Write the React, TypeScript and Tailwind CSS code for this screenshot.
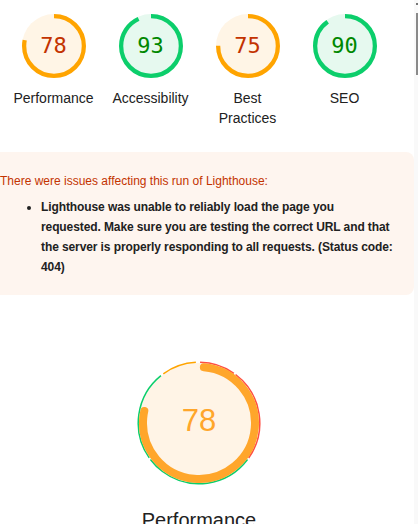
import { ReactNode } from "react";

const SMALL_R = 56;
const SMALL_C = 2 * Math.PI * SMALL_R;

type Tone = "average" | "pass";

const tones: Record<Tone, { arc: string; fill: string; text: string }> = {
  average: { arc: "#ffa400", fill: "#fff5e6", text: "text-[#c33300]" },
  pass: { arc: "#0cce6b", fill: "#e6f9ef", text: "text-[#008800]" },
};

function cx(...parts: string[]) {
  return parts.join(" ");
}

const SmallGauge = ({
  score,
  tone,
  label,
}: {
  score: number;
  tone: Tone;
  label: ReactNode;
}) => {
  const t = tones[tone];
  return (
    <div className="flex w-[97px] flex-col items-center">
      <div className="relative h-[64px] w-[64px]">
        <svg viewBox="0 0 120 120" className="h-[64px] w-[64px]">
          <circle cx="60" cy="60" r="60" fill={t.fill} />
          <circle
            cx="60"
            cy="60"
            r={SMALL_R}
            fill="none"
            stroke={t.arc}
            strokeWidth="8"
            strokeDasharray={`${(score / 100) * SMALL_C} ${SMALL_C}`}
            transform="rotate(-90 60 60)"
          />
        </svg>
        <div
          className={cx(
            "absolute inset-0 flex items-center justify-center pb-px font-['DejaVu_Sans_Mono',monospace] text-[22px]",
            t.text
          )}
        >
          {score}
        </div>
      </div>
      <div className="mt-[10px] w-[86px] text-center text-[14px] leading-[20px] text-[#212121]">
        {label}
      </div>
    </div>
  );
};

// performance gauge with the metric arcs round the outside
const BIG_R = 56;
const BIG_C = 2 * Math.PI * BIG_R;
const THIN_R = 60.75;
const THIN_C = 2 * Math.PI * THIN_R;

const metricArcs = [
  { from: 1, to: 35, color: "#ff4e42" },
  { from: 37, to: 125, color: "#ff4e42" },
  { from: 127, to: 233, color: "#0cce6b" },
  { from: 235, to: 321, color: "#0cce6b" },
  { from: 324, to: 357, color: "#ffa400" },
];

const PerfGauge = () => {
  const start = 5;
  const end = 282;
  return (
    <div className="flex flex-col items-center">
      <div className="relative h-[124px] w-[124px]">
        <svg viewBox="0 0 124 124" className="h-[124px] w-[124px]">
          <circle cx="62" cy="62" r="60" fill="#fff4e6" />
          {metricArcs.map((a) => (
            <circle
              key={a.from}
              cx="62"
              cy="62"
              r={THIN_R}
              fill="none"
              stroke={a.color}
              strokeWidth="1.5"
              strokeDasharray={`${((a.to - a.from) / 360) * THIN_C} ${THIN_C}`}
              transform={`rotate(${a.from - 90} 62 62)`}
            />
          ))}
          <circle
            cx="62"
            cy="62"
            r={BIG_R}
            fill="none"
            stroke="#ffa62b"
            strokeWidth="8"
            strokeLinecap="round"
            strokeDasharray={`${((end - start) / 360) * BIG_C} ${BIG_C}`}
            transform={`rotate(${start - 90} 62 62)`}
          />
        </svg>
        <div className="absolute inset-0 flex items-center justify-center pb-[4px] text-[31px] text-[#ffa62b]">
          78
        </div>
      </div>
      <div className="mt-[21px] text-[20px] leading-[28px] text-[#212121]">
        Performance
      </div>
    </div>
  );
};

export default function App() {
  return (
    <div className="flex h-[524px] w-[418px] overflow-hidden bg-white font-['Liberation_Sans',Arial,sans-serif]">
      <main className="flex w-[414px] flex-col">
        <div className="flex w-[398px] justify-center pt-[14px]">
          <SmallGauge score={78} tone="average" label="Performance" />
          <SmallGauge score={93} tone="pass" label="Accessibility" />
          <SmallGauge score={75} tone="average" label="Best Practices" />
          <SmallGauge score={90} tone="pass" label="SEO" />
        </div>

        <div className="mt-[20px] h-px bg-[#e0e0e0]" />

        <div className="mt-[4px] rounded-r-lg bg-[#fef5ef] pt-[21px] pb-[18px] pr-[2px]">
          <div className="text-[12px] leading-[16px] text-[#c33300]">
            There were issues affecting this run of Lighthouse:
          </div>
          <ul className="mt-[8px] list-disc pl-[41px] text-[12px] font-bold leading-[20px] tracking-[-0.1px] text-[#212121]">
            <li>
              Lighthouse was unable to reliably load the page you
              <br />
              requested. Make sure you are testing the correct URL and that
              <br />
              the server is properly responding to all requests. (Status code:
              404)
            </li>
          </ul>
        </div>

        <div className="mt-[66px] flex w-[398px] justify-center">
          <PerfGauge />
        </div>
      </main>

      <div className="flex w-[4px] flex-col bg-[#f9f9f9]">
        <div className="mt-[3px] ml-[2px] h-[2px] w-[2px] bg-[#777]" />
        <div className="mt-[8px] ml-[2px] h-[62px] w-[2px] bg-[#8a8a8a]" />
      </div>
    </div>
  );
}
